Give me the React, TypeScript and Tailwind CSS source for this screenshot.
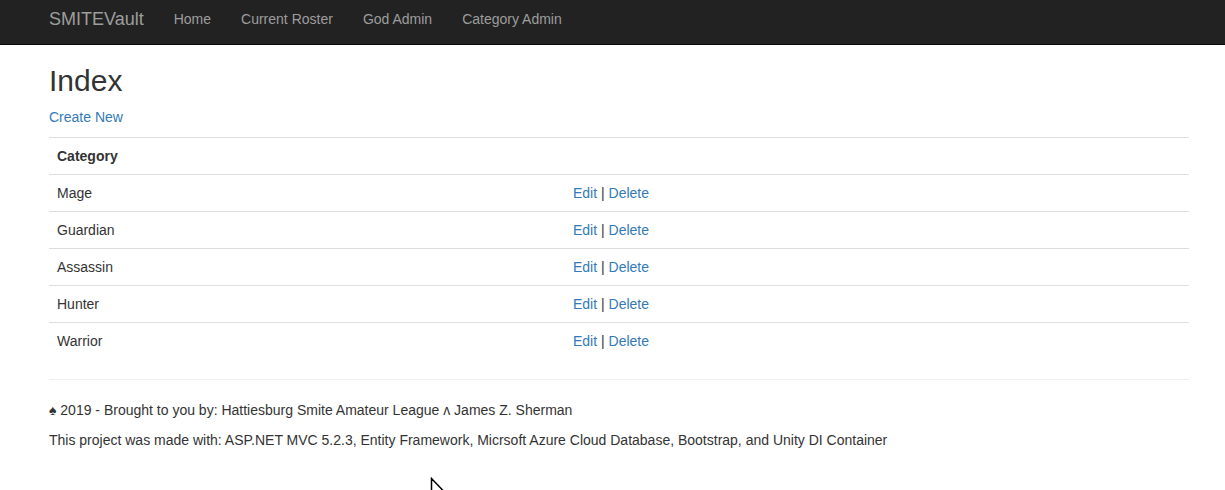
import React from "react";

const rows = ["Mage", "Guardian", "Assassin", "Hunter", "Warrior"];

export default function App() {
  return (
    <div
      className="relative min-h-[490px] bg-white text-[14px] leading-[20px] text-[#333]"
      style={{ fontFamily: '"Liberation Sans", Arial, Helvetica, sans-serif' }}
    >
      <nav className="h-[45px] bg-[#222] border-b border-[#080808]">
        <div className="ml-[49px] w-[1140px] h-[44px] pt-[9px] flex items-start">
          <a className="text-[18px] leading-[20px] text-[#9d9d9d] pr-[15px]">SMITEVault</a>
          <a className="text-[#9d9d9d] px-[15px]">Home</a>
          <a className="text-[#9d9d9d] px-[15px]">Current Roster</a>
          <a className="text-[#9d9d9d] px-[15px]">God Admin</a>
          <a className="text-[#9d9d9d] px-[15px]">Category Admin</a>
        </div>
      </nav>
      <div className="ml-[49px] w-[1140px]">
        <h2 className="mt-[19px] mb-[10px] text-[30px] leading-[33px] font-normal">Index</h2>
        <p className="mb-[10px]">
          <a className="text-[#337ab7]">Create New</a>
        </p>
        <table className="w-full mb-[20px] border-collapse">
          <tbody>
            <tr>
              <th className="w-[516px] text-left font-bold p-[8px] border-t border-[#ddd]">Category</th>
              <th className="p-[8px] border-t border-[#ddd]"></th>
            </tr>
            {rows.map((r) => (
              <tr key={r}>
                <td className="p-[8px] border-t border-[#ddd]">{r}</td>
                <td className="p-[8px] border-t border-[#ddd]">
                  <a className="text-[#337ab7]">Edit</a> | <a className="text-[#337ab7]">Delete</a>
                </td>
              </tr>
            ))}
          </tbody>
        </table>
        <hr className="mt-[20px] mb-[20px] border-0 border-t border-[#eee]" />
        <footer>
          <p className="mb-[10px]">♠ 2019 - Brought to you by: Hattiesburg Smite Amateur League ʌ James Z. Sherman</p>
          <p className="mb-[10px]">
            This project was made with: ASP.NET MVC 5.2.3, Entity Framework, Micrsoft Azure Cloud Database, Bootstrap, and Unity DI Container
          </p>
        </footer>
      </div>
      <svg className="absolute left-[430px] top-[477px]" width="16" height="24" viewBox="0 0 16 24">
        <path d="M1.5 1.5 L1.5 19 L5.5 15 L9 22 L11.5 21 L8 14 L13.5 14 Z" fill="#fff" stroke="#000" strokeWidth="1.5" strokeLinejoin="miter" />
      </svg>
    </div>
  );
}
